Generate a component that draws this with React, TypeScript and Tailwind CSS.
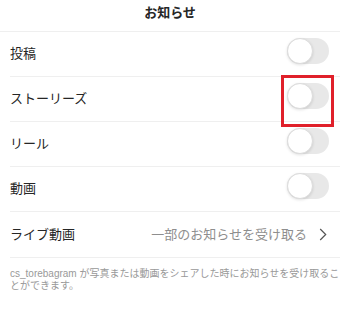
import React, { useState } from 'react';

const font = { fontFamily: '"Liberation Sans", "Noto Sans CJK JP", "Noto Sans", sans-serif' };

function Toggle({ on, onClick }: { on: boolean; onClick: () => void }) {
  return (
    <button
      onClick={onClick}
      className={`relative w-[42px] h-[26px] rounded-full transition-colors ${on ? 'bg-[#3897f0]' : 'bg-[#e8e8e8]'}`}
    >
      <span
        className={`absolute top-0 w-[26px] h-[26px] rounded-full bg-white border border-[#dcdcdc] shadow-[0_1px_3px_rgba(0,0,0,0.12)] transition-all ${on ? 'left-[16px]' : 'left-0'}`}
      />
    </button>
  );
}

export default function App() {
  const [toggles, setToggles] = useState<Record<string, boolean>>({
    post: false,
    stories: false,
    reels: false,
    video: false,
  });

  const rows = [
    { key: 'post', label: '投稿' },
    { key: 'stories', label: 'ストーリーズ', highlight: true },
    { key: 'reels', label: 'リール' },
    { key: 'video', label: '動画' },
  ];

  const flip = (key: string) => setToggles(prev => ({ ...prev, [key]: !prev[key] }));

  return (
    <div className="w-[340px] h-[309px] bg-white overflow-hidden text-[#262626]" style={font}>
      {/* Header */}
      <div className="h-[32px] flex items-center justify-center border-b border-[#efefef]">
        <h1 className="text-[13px] font-bold leading-none -mt-[6px]">お知らせ</h1>
      </div>

      <div className="pl-[10px]">
        {rows.map(row => (
          <div key={row.key} className="h-[45px] flex items-center justify-between border-b border-[#efefef] pr-[11px]">
            <span className="text-[13px]">{row.label}</span>
            <div className="relative">
              <Toggle on={toggles[row.key]} onClick={() => flip(row.key)} />
              {row.highlight && (
                <span className="absolute -left-[6px] -right-[5px] -top-[8px] -bottom-[11px] border-[3px] border-[#e0202a] pointer-events-none" />
              )}
            </div>
          </div>
        ))}

        {/* Live video */}
        <div className="h-[46px] flex items-center justify-between border-b border-[#efefef] pr-[13px]">
          <span className="text-[13px]">ライブ動画</span>
          <div className="flex items-center gap-[12px]">
            <span className="text-[13px] text-[#8e8e8e]">一部のお知らせを受け取る</span>
            <svg className="w-[8px] h-[13px]" viewBox="0 0 8 13" fill="none" stroke="#555" strokeWidth="1.2">
              <path d="M1.2 1l5.5 5.5-5.5 5.5" />
            </svg>
          </div>
        </div>

        <p className="pt-[10px] text-[10px] leading-[12px] text-[#999]">
          cs_torebagram が写真または動画をシェアした時にお知らせを受け取ることができます。
        </p>
      </div>
    </div>
  );
}
